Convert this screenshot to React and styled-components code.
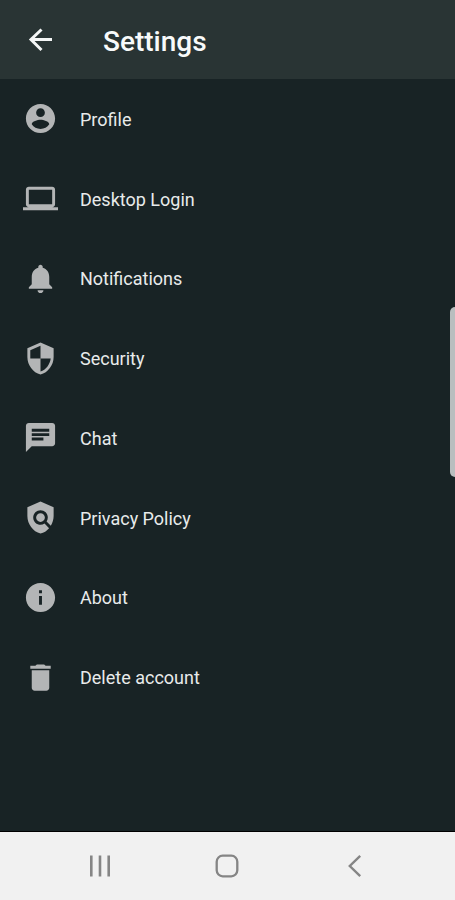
import React from "react";
import styled, { createGlobalStyle } from "styled-components";

const GlobalStyle = createGlobalStyle`
  *, *::before, *::after { box-sizing: border-box; }
  body {
    margin: 0;
    background: #182325;
    font-family: Roboto, "Noto Sans", sans-serif;
  }
`;

const Screen = styled.div`
  position: relative;
  display: flex;
  flex-direction: column;
  min-height: 100vh;
  background: #182325;
  color: #e8ebeb;
`;

const Header = styled.header`
  display: flex;
  align-items: center;
  gap: 48px;
  height: 79px;
  padding: 0 24px;
  background: #293434;
`;

const IconButton = styled.button`
  display: flex;
  align-items: center;
  justify-content: center;
  padding: 0;
  border: 0;
  background: transparent;
  color: ${({ $color }) => $color};
  cursor: pointer;
`;

const Title = styled.h1`
  margin: 0;
  padding-top: 4px;
  color: #f8fafa;
  font-size: 28px;
  font-weight: 500;
  line-height: 32px;
`;

const Main = styled.main`
  display: flex;
  flex: 1;
  flex-direction: column;
`;

const List = styled.ul`
  display: grid;
  flex: 1;
  grid-auto-rows: 1fr;
  margin: 0;
  padding: 0 0 114px;
  list-style: none;
`;

const ListItem = styled.li`
  display: flex;
`;

const RowButton = styled.button`
  display: flex;
  flex: 1;
  align-items: center;
  gap: 22px;
  padding: 0 23px;
  border: 0;
  background: transparent;
  color: inherit;
  font: inherit;
  font-size: 18px;
  line-height: 24px;
  text-align: left;
  cursor: pointer;
`;

const RowLabel = styled.span`
  padding-top: 2px;
`;

const RowIcon = styled.svg`
  flex: none;
  width: 35px;
  height: 35px;
  fill: #b3b5b6;
`;

const EdgeHandle = styled.div`
  position: absolute;
  top: 307px;
  right: 0;
  width: 5px;
  height: 170px;
  border-radius: 5px 0 0 5px;
  background: #b9bebf;
`;

const SystemBar = styled.nav`
  display: grid;
  grid-template-columns: repeat(3, 1fr);
  height: 69px;
  padding: 0 36px;
  border-top: 1px solid #000000;
  background: #f1f1f1;
`;

const items = [
  {
    label: "Profile",
    path: "M12 2C6.48 2 2 6.48 2 12s4.48 10 10 10 10-4.48 10-10S17.52 2 12 2zm0 3c1.66 0 3 1.34 3 3s-1.34 3-3 3-3-1.34-3-3 1.34-3 3-3zm0 14.2c-2.5 0-4.71-1.28-6-3.22.03-1.99 4-3.08 6-3.08 1.99 0 5.97 1.09 6 3.08-1.29 1.94-3.5 3.22-6 3.22z",
  },
  {
    label: "Desktop Login",
    path: "M20 18c1.1 0 1.99-.9 1.99-2L22 6c0-1.1-.9-2-2-2H4c-1.1 0-2 .9-2 2v10c0 1.1.9 2 2 2H0v2h24v-2h-4zM4 6h16v10H4V6z",
  },
  {
    label: "Notifications",
    path: "M12 22c1.1 0 2-.9 2-2h-4c0 1.1.89 2 2 2zm6-6v-5c0-3.07-1.64-5.64-4.5-6.32V4c0-.83-.67-1.5-1.5-1.5s-1.5.67-1.5 1.5v.68C7.63 5.36 6 7.92 6 11v5l-2 2v1h16v-1l-2-2z",
  },
  {
    label: "Security",
    path: "M12 1L3 5v6c0 5.55 3.84 10.74 9 12 5.16-1.26 9-6.45 9-12V5l-9-4zm0 10.99h7c-.53 4.12-3.28 7.79-7 8.94V12H5V6.3l7-3.11v8.8z",
  },
  {
    label: "Chat",
    path: "M20 2H4c-1.1 0-1.99.9-1.99 2L2 22l4-4h14c1.1 0 2-.9 2-2V4c0-1.1-.9-2-2-2zM6 9h12v2H6V9zm8 5H6v-2h8v2zm4-6H6V6h12v2z",
  },
  {
    label: "Privacy Policy",
    path: "M21 5l-9-4-9 4v6c0 5.55 3.84 10.74 9 12 2.3-.56 4.33-1.9 5.88-3.71l-3.12-3.12c-1.94 1.29-4.58 1.07-6.29-.64-1.95-1.95-1.95-5.12 0-7.07 1.95-1.95 5.12-1.95 7.07 0 1.71 1.71 1.92 4.35.64 6.29l2.9 2.9C20.29 15.69 21 13.38 21 11V5zM12 9a3 3 0 1 0 0 6 3 3 0 0 0 0-6z",
  },
  {
    label: "About",
    path: "M12 2C6.48 2 2 6.48 2 12s4.48 10 10 10 10-4.48 10-10S17.52 2 12 2zm1 15h-2v-6h2v6zm0-8h-2V7h2v2z",
  },
  {
    label: "Delete account",
    path: "M6 19c0 1.1.9 2 2 2h8c1.1 0 2-.9 2-2V7H6v12zM19 4h-3.5l-1-1h-5l-1 1H5v2h14V4z",
  },
];

export default function App() {
  return (
    <Screen>
      <GlobalStyle />
      <Header>
        <IconButton type="button" aria-label="Back" $color="#f4f6f6">
          <svg width="31" height="35" viewBox="0 0 31 35" fill="none" stroke="currentColor" strokeWidth="3">
            <path d="M28 17.5H7M17.5 7.5 7 17.5 17.5 28" />
          </svg>
        </IconButton>
        <Title>Settings</Title>
      </Header>
      <Main>
        <List>
          {items.map(({ label, path }) => (
            <ListItem key={label}>
              <RowButton type="button">
                <RowIcon viewBox="0 0 24 24" aria-hidden="true">
                  <path d={path} />
                </RowIcon>
                <RowLabel>{label}</RowLabel>
              </RowButton>
            </ListItem>
          ))}
        </List>
      </Main>
      <EdgeHandle />
      <SystemBar aria-label="System">
        <IconButton type="button" aria-label="Recent apps" $color="#858585">
          <svg width="24" height="24" viewBox="0 0 24 24" fill="none" stroke="currentColor" strokeWidth="2.6">
            <path d="M3.3 1.5v21M12 1.5v21M20.7 1.5v21" />
          </svg>
        </IconButton>
        <IconButton type="button" aria-label="Home" $color="#858585">
          <svg width="24" height="24" viewBox="0 0 24 24" fill="none" stroke="currentColor" strokeWidth="2.3">
            <rect x="1.7" y="1.7" width="20.6" height="20.6" rx="6" />
          </svg>
        </IconButton>
        <IconButton type="button" aria-label="Go back" $color="#858585">
          <svg width="24" height="24" viewBox="0 0 24 24" fill="none" stroke="currentColor" strokeWidth="2.4">
            <path d="M17.2 1.8 6.8 12l10.4 10.2" />
          </svg>
        </IconButton>
      </SystemBar>
    </Screen>
  );
}
